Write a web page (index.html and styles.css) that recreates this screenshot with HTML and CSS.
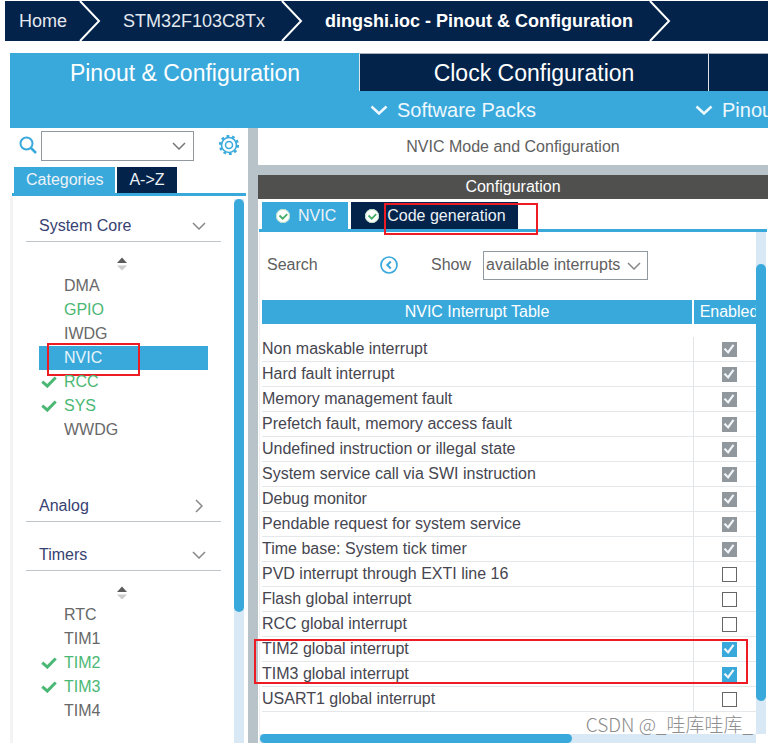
FILE: index.html
```html
<!DOCTYPE html>
<html lang="en">
<head>
<meta charset="utf-8">
<title>dingshi.ioc - Pinout &amp; Configuration</title>
<link rel="stylesheet" href="styles.css">
</head>
<body>
<svg class="defs" aria-hidden="true">
  <symbol id="chev" viewBox="0 0 14 8"><path d="M1 1l6 6 6-6" fill="none" stroke="currentColor" stroke-width="1.5"/></symbol>
  <symbol id="bold-chev" viewBox="0 0 18 10"><path d="M1.5 1.5L9 8.500l7.500-7" fill="none" stroke="currentColor" stroke-width="2.500"/></symbol>
  <symbol id="tick" viewBox="0 0 16 12"><path d="M1.300 5.700l5 4.400 8.400-8.600" fill="none" stroke="currentColor" stroke-width="3"/></symbol>
  <symbol id="crumb" viewBox="0 0 22 40"><path d="M1 0l19 20L1 40" fill="none" stroke="currentColor" stroke-width="2"/></symbol>
  <symbol id="sort" viewBox="0 0 10 14"><path d="M0 6l5-5.500L10 6z" fill="#5c5c5c"/><path d="M0 8.500h10l-5 5z" fill="#ccc"/></symbol>
  <symbol id="badge" viewBox="0 0 14 14"><circle cx="7" cy="7" r="7" fill="#fff"/><circle cx="7" cy="7" r="6.500" fill="none" stroke="#b9dfc3"/><path d="M3.500 6.500l3.200 3.200 4.500-4.500" fill="none" stroke="#45ad68" stroke-width="1.800"/></symbol>
</svg>

<nav class="crumbs">
  <a href="#">Home</a><svg><use href="#crumb"/></svg>
  <a href="#">STM32F103C8Tx</a><svg class="wide"><use href="#crumb"/></svg>
  <a href="#" class="current">dingshi.ioc - Pinout &amp; Configuration</a><svg class="wide"><use href="#crumb"/></svg>
</nav>

<header class="top">
  <div class="modes">
    <button class="mode active">Pinout &amp; Configuration</button>
    <button class="mode">Clock Configuration</button>
    <button class="mode" aria-label="Project Manager"></button>
  </div>
  <div class="menus">
    <button class="menu packs"><svg><use href="#bold-chev"/></svg>Software Packs</button>
    <button class="menu pinout"><svg><use href="#bold-chev"/></svg>Pinout</button>
  </div>
</header>

<main class="work">
  <aside class="side">
    <div class="finder">
      <svg class="lens" viewBox="0 0 18 18"><circle cx="7.500" cy="7.500" r="6" fill="none" stroke="currentColor" stroke-width="2"/><path d="M12 12l5 5" stroke="currentColor" stroke-width="2.500"/></svg>
      <div class="combo"><input type="text" aria-label="Search peripherals"><button aria-label="Show history"><svg><use href="#chev"/></svg></button></div>
      <button class="gear" aria-label="Settings"><svg viewBox="0 0 22 22" fill="none" stroke="currentColor"><circle cx="11" cy="11" r="7.500" stroke-width="1.600"/><circle cx="11" cy="11" r="9" stroke-width="2.200" stroke-dasharray="2.830 2.830"/><circle cx="11" cy="11" r="3.500" stroke-width="1.500"/></svg></button>
    </div>
    <div class="tabs side-tabs"><button class="tab active">Categories</button><button class="tab">A-&gt;Z</button></div>
    <div class="side-body">
      <div class="tree">
        <section>
          <h2><button>System Core<svg><use href="#chev"/></svg></button></h2>
          <svg class="sort"><use href="#sort"/></svg>
          <ul>
            <li>DMA</li>
            <li class="on">GPIO</li>
            <li>IWDG</li>
            <li class="selected">NVIC<span class="mark mark-item"></span></li>
            <li class="on"><svg><use href="#tick"/></svg>RCC</li>
            <li class="on"><svg><use href="#tick"/></svg>SYS</li>
            <li>WWDG</li>
          </ul>
        </section>
        <section class="closed">
          <h2><button>Analog<svg><use href="#chev"/></svg></button></h2>
        </section>
        <section>
          <h2><button>Timers<svg><use href="#chev"/></svg></button></h2>
          <svg class="sort"><use href="#sort"/></svg>
          <ul>
            <li>RTC</li>
            <li>TIM1</li>
            <li class="on"><svg><use href="#tick"/></svg>TIM2</li>
            <li class="on"><svg><use href="#tick"/></svg>TIM3</li>
            <li>TIM4</li>
          </ul>
        </section>
      </div>
      <div class="track side-track"><div class="thumb"></div></div>
    </div>
  </aside>

  <section class="detail">
    <h1>NVIC Mode and Configuration</h1>
    <h2 class="bar">Configuration</h2>
    <div class="pane">
      <div class="tabs pane-tabs">
        <button class="tab active"><svg><use href="#badge"/></svg>NVIC</button>
        <button class="tab"><svg><use href="#badge"/></svg>Code generation<span class="mark mark-tab"></span></button>
      </div>
      <div class="pane-body">
        <div class="content">
          <div class="filters">
            <span class="find">Search</span>
            <button class="back" aria-label="Previous"><svg viewBox="0 0 18 18" fill="none" stroke="currentColor" stroke-width="1.700"><circle cx="9" cy="9" r="8"/><path d="M10.800 5.500L7.300 9l3.500 3.500" stroke-width="2"/></svg></button>
            <label for="show">Show</label>
            <div class="select"><select id="show"><option>available interrupts</option></select><svg><use href="#chev"/></svg></div>
          </div>
          <div class="scroller">
            <table>
              <colgroup><col class="c-name"><col class="c-on"></colgroup>
              <thead><tr><th>NVIC Interrupt Table</th><th>Enabled</th></tr></thead>
              <tbody>
                <tr><td><label for="i1">Non maskable interrupt</label></td><td><input id="i1" type="checkbox" checked disabled></td></tr>
                <tr><td><label for="i2">Hard fault interrupt</label></td><td><input id="i2" type="checkbox" checked disabled></td></tr>
                <tr><td><label for="i3">Memory management fault</label></td><td><input id="i3" type="checkbox" checked disabled></td></tr>
                <tr><td><label for="i4">Prefetch fault, memory access fault</label></td><td><input id="i4" type="checkbox" checked disabled></td></tr>
                <tr><td><label for="i5">Undefined instruction or illegal state</label></td><td><input id="i5" type="checkbox" checked disabled></td></tr>
                <tr><td><label for="i6">System service call via SWI instruction</label></td><td><input id="i6" type="checkbox" checked disabled></td></tr>
                <tr><td><label for="i7">Debug monitor</label></td><td><input id="i7" type="checkbox" checked disabled></td></tr>
                <tr><td><label for="i8">Pendable request for system service</label></td><td><input id="i8" type="checkbox" checked disabled></td></tr>
                <tr><td><label for="i9">Time base: System tick timer</label></td><td><input id="i9" type="checkbox" checked disabled></td></tr>
                <tr><td><label for="i10">PVD interrupt through EXTI line 16</label></td><td><input id="i10" type="checkbox"></td></tr>
                <tr><td><label for="i11">Flash global interrupt</label></td><td><input id="i11" type="checkbox"></td></tr>
                <tr><td><label for="i12">RCC global interrupt</label></td><td><input id="i12" type="checkbox"></td></tr>
                <tr><td><label for="i13">TIM2 global interrupt</label></td><td><input id="i13" type="checkbox" checked></td></tr>
                <tr><td><label for="i14">TIM3 global interrupt</label></td><td><input id="i14" type="checkbox" checked></td></tr>
                <tr><td><label for="i15">USART1 global interrupt</label></td><td><input id="i15" type="checkbox"></td></tr>
              </tbody>
            </table>
          </div>
          <span class="mark mark-rows"></span>
          <span class="credit">CSDN @_哇库哇库_</span>
        </div>
        <div class="track v-track"><div class="thumb"></div></div>
        <div class="track h-track"><div class="thumb"></div></div>
      </div>
    </div>
  </section>
</main>
</body>
</html>
```
FILE: styles.css
```css
:root {
  --blue: #39a9dc;
  --navy: #03234b;
  --gray: #b8c3c9;
  --pale: #d8e8f5;
  --red: #ed1c24;
}
* { box-sizing: border-box; }
body {
  margin: 0;
  min-height: 100vh;
  display: flex;
  flex-direction: column;
  overflow: hidden;
  background: #fff;
  color: #464650;
  font: 16px/24px "Liberation Sans", Arial, sans-serif;
}
button, input, select { font: inherit; color: inherit; }
button { padding: 0; border: 0; background: none; }
h1, h2, ul { margin: 0; padding: 0; font-size: 16px; font-weight: normal; }
ul { list-style: none; }
svg { flex: none; display: block; }
.defs { position: absolute; width: 0; height: 0; }

.crumbs {
  display: flex;
  align-items: center;
  height: 40px;
  margin: 1px 0 12px 5px;
  padding-left: 14px;
  background: var(--navy);
  color: #fff;
  font-size: 18px;
  white-space: nowrap;
}
.crumbs a { color: #e4e9ef; text-decoration: none; }
.crumbs a.current { color: #fff; font-weight: bold; }
.crumbs svg { width: 22px; height: 40px; margin: 0 22px 0 12px; }
.crumbs svg.wide { margin-left: 16px; }

.top { margin-left: 10px; background: var(--blue); color: #fff; }
.modes { display: grid; grid-template-columns: 349fr 349fr 60fr; height: 38px; }
.mode {
  overflow: hidden;
  border-left: 1px solid #dfe6ea;
  border-top: 1px solid #a5afbd;
  background: var(--navy);
  font-size: 23px;
  white-space: nowrap;
}
.mode.active { border-color: var(--blue); background: var(--blue); }
.menus { display: flex; height: 37px; overflow: hidden; }
.menu { display: flex; flex: none; align-items: center; gap: 9px; font-size: 20px; color: #eef8fd; }
.menu svg { width: 18px; height: 10px; }
.packs { width: 325px; margin-left: 360px; }

.work { flex: 1; display: grid; grid-template-columns: 248px 1fr; background: var(--gray); }
.side { display: flex; flex-direction: column; padding: 0 2px 0 10px; background: #fff; }
.finder { display: flex; align-items: center; height: 39px; padding: 0 6px 5px 9px; color: var(--blue); }
.lens { width: 18px; height: 18px; }
.combo { display: flex; width: 153px; height: 30px; margin: 2px auto 0 4px; border: 1px solid #8f999f; color: #777; }
.combo input { min-width: 0; flex: 1; border: 0; outline: 0; background: none; }
.combo svg { width: 14px; height: 8px; margin: 0 7px; }
.gear svg { width: 22px; height: 22px; }

.tabs { display: flex; border-bottom: 3px solid var(--blue); }
.tab {
  position: relative;
  display: flex;
  align-items: center;
  height: 26px;
  padding: 0 12px;
  background: var(--navy);
  color: #edf2f6;
  white-space: nowrap;
}
.tab.active { background: var(--blue); }
.side-tabs { margin: 0 0 0 2px; padding-left: 2px; gap: 2px; }

.side-body { flex: 1; display: flex; border-left: 3px solid #f3f3f3; }
.tree { flex: 1; padding: 14px 13px 0; }
.tree h2 { border-bottom: 1px solid #bcc6cb; }
.tree h2 button { display: flex; align-items: center; justify-content: space-between; width: 100%; height: 31px; padding: 0 15px 0 13px; color: #374272; }
.tree h2 svg { width: 14px; height: 8px; color: #888; }
.closed h2 svg { transform: rotate(-90deg); }
.closed { margin: 48px 0 17px; }
.sort { width: 10px; height: 14px; margin: 15px 94px 3px auto; }
.tree ul { padding: 0 13px; color: #686868; }
.tree li { position: relative; display: flex; align-items: center; height: 24px; padding-left: 25px; }
.tree li.on { color: #4bb774; }
.tree li svg { width: 16px; height: 12px; margin: 0 7px 0 -23px; }
.tree li.selected { background: var(--blue); color: #e8f5fb; }
.track { background: var(--pale); }
.thumb { border-radius: 5px; background: var(--blue); }
.side-track { width: 10px; margin: 3px 2px 0 0; }
.side-track .thumb { height: 76%; }

.detail { display: flex; flex-direction: column; min-width: 0; padding-left: 10px; text-align: center; }
.detail h1 { height: 37px; margin-bottom: 10px; background: #fff; color: #606060; line-height: 38px; }
.detail .bar { background: #50514f; color: #fff; }
.pane { flex: 1; display: flex; flex-direction: column; padding: 3px 1px 0; background: #fff; }
.pane-tabs { gap: 3px; padding-left: 3px; }
.pane-tabs .tab { height: 27px; padding: 0 12px 0 14px; }
.pane-tabs svg { width: 14px; height: 14px; margin-right: 8px; }
.pane-body {
  flex: 1;
  display: grid;
  grid-template-columns: minmax(0, 1fr) 10px;
  grid-template-rows: 1fr 9px;
  border-left: 1px solid #f0f0f0;
  padding-right: 1px;
}
.content { position: relative; padding: 18px 0 0 2px; text-align: left; }
.filters { display: flex; align-items: center; height: 30px; padding-left: 5px; margin-bottom: 20px; color: #606060; }
.find { width: 113px; }
.back { margin-right: 33px; color: var(--blue); }
.back svg { width: 18px; height: 18px; }
.select { position: relative; width: 165px; height: 29px; margin-left: 12px; }
.select select { appearance: none; width: 100%; height: 100%; padding: 0 2px; border: 1px solid #8f999f; border-radius: 0; background: #fff; }
.select svg { position: absolute; right: 7px; top: 11px; width: 14px; height: 8px; color: #888; pointer-events: none; }
.scroller { overflow: hidden; }
table { width: 502px; border-collapse: separate; border-spacing: 0; table-layout: fixed; }
.c-name { width: 432px; }
.c-on { width: 70px; }
th { height: 24px; padding: 0; background: var(--blue); color: #fff; font-weight: normal; text-align: center; }
th:first-child { border-right: 2px solid #fff; }
tbody::before { content: ""; display: block; height: 13px; }
td { height: 25px; padding: 0; border-bottom: 1px solid #e5e8ea; white-space: nowrap; }
td:first-child { border-right: 1px solid #e1e5e8; }
td:last-child { text-align: center; }
td input {
  appearance: none;
  display: block;
  width: 15px;
  height: 15px;
  margin: 0 auto;
  border: 1px solid #666;
  background: #fff;
}
td input:checked { border: 0; background: var(--blue); }
td input:checked:disabled { background: #90989e; }
td input:checked::before {
  content: "";
  display: block;
  width: 15px;
  height: 15px;
  background: #f3f6f8;
  clip-path: polygon(14% 52%, 27% 43%, 42% 61%, 75% 19%, 86% 27%, 45% 83%);
}

.mark { position: absolute; border: 2px solid var(--red); pointer-events: none; }
.mark-item { left: 8px; top: -3px; width: 93px; height: 33px; }
.mark-tab { z-index: 1; left: 33px; top: 1px; width: 154px; height: 32px; }
.mark-rows { left: -6px; top: 407px; width: 494px; height: 45px; }
.credit {
  position: absolute;
  right: 3px;
  bottom: -4px;
  color: #8c8c8c;
  font: 300 19px/28px "Noto Sans CJK SC", sans-serif;
}
.v-track { padding-top: 32px; }
.v-track .thumb { height: 93%; }
.h-track .thumb { width: 63%; height: 9px; }
```
